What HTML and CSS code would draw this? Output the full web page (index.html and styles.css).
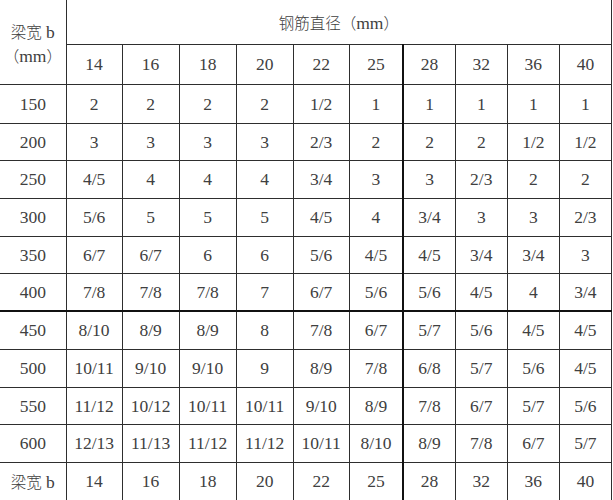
FILE: index.html
```html
<!DOCTYPE html>
<html lang="zh">
<head>
<meta charset="utf-8">
<link rel="stylesheet" href="styles.css">
</head>
<body>
<table class="rebar">
  <colgroup>
    <col class="c-head"><col class="c-a"><col class="c-b"><col class="c-b"><col class="c-b"><col class="c-a"><col class="c-c"><col class="c-d"><col class="c-d"><col class="c-d"><col class="c-d">
  </colgroup>
  <tr class="r-top">
    <td class="side head-side" rowspan="2"><span class="cjk">梁宽</span> b<br><span class="cjk">（</span>mm<span class="cjk">）</span></td>
    <td class="title" colspan="10"><span class="cjk">钢筋直径（</span>mm<span class="cjk">）</span></td>
  </tr>
  <tr class="r-dia">
    <td>14</td><td>16</td><td>18</td><td>20</td><td>22</td><td class="split">25</td><td>28</td><td>32</td><td>36</td><td>40</td>
  </tr>
  <tr class="r1"><td class="side">150</td><td>2</td><td>2</td><td>2</td><td>2</td><td>1/2</td><td class="split">1</td><td>1</td><td>1</td><td>1</td><td>1</td></tr>
  <tr class="r2"><td class="side">200</td><td>3</td><td>3</td><td>3</td><td>3</td><td>2/3</td><td class="split">2</td><td>2</td><td>2</td><td>1/2</td><td>1/2</td></tr>
  <tr class="r3"><td class="side">250</td><td>4/5</td><td>4</td><td>4</td><td>4</td><td>3/4</td><td class="split">3</td><td>3</td><td>2/3</td><td>2</td><td>2</td></tr>
  <tr class="r3"><td class="side">300</td><td>5/6</td><td>5</td><td>5</td><td>5</td><td>4/5</td><td class="split">4</td><td>3/4</td><td>3</td><td>3</td><td>2/3</td></tr>
  <tr class="r4"><td class="side">350</td><td>6/7</td><td>6/7</td><td>6</td><td>6</td><td>5/6</td><td class="split">4/5</td><td>4/5</td><td>3/4</td><td>3/4</td><td>3</td></tr>
  <tr class="r3 thick"><td class="side">400</td><td>7/8</td><td>7/8</td><td>7/8</td><td>7</td><td>6/7</td><td class="split">5/6</td><td>5/6</td><td>4/5</td><td>4</td><td>3/4</td></tr>
  <tr class="r3"><td class="side">450</td><td>8/10</td><td>8/9</td><td>8/9</td><td>8</td><td>7/8</td><td class="split">6/7</td><td>5/7</td><td>5/6</td><td>4/5</td><td>4/5</td></tr>
  <tr class="r3"><td class="side">500</td><td>10/11</td><td>9/10</td><td>9/10</td><td>9</td><td>8/9</td><td class="split">7/8</td><td>6/8</td><td>5/7</td><td>5/6</td><td>4/5</td></tr>
  <tr class="r4"><td class="side">550</td><td>11/12</td><td>10/12</td><td>10/11</td><td>10/11</td><td>9/10</td><td class="split">8/9</td><td>7/8</td><td>6/7</td><td>5/7</td><td>5/6</td></tr>
  <tr class="r3"><td class="side">600</td><td>12/13</td><td>11/13</td><td>11/12</td><td>11/12</td><td>10/11</td><td class="split">8/10</td><td>8/9</td><td>7/8</td><td>6/7</td><td>5/7</td></tr>
  <tr class="r3 last"><td class="side"><span class="cjk">梁宽</span> b</td><td>14</td><td>16</td><td>18</td><td>20</td><td>22</td><td class="split">25</td><td>28</td><td>32</td><td>36</td><td>40</td></tr>
</table>
</body>
</html>
```

FILE: styles.css
```css
html, body {
  margin: 0;
  padding: 0;
  background: #ffffff;
}

.rebar {
  border-collapse: collapse;
  table-layout: fixed;
  width: 612px;
  font-family: "Liberation Serif", "Noto Sans CJK SC", serif;
  font-size: 17.5px;
  color: #404040;
}

.c-head { width: 66px; }
.c-a { width: 56px; }
.c-b { width: 57px; }
.c-c { width: 54px; }
.c-d { width: 52px; }

.rebar td {
  border: 1px solid #2e2e2e;
  padding: 0;
  text-align: center;
  vertical-align: middle;
  line-height: 20px;
}

.cjk {
  font-family: "Noto Sans CJK SC", sans-serif;
  font-size: 15.5px;
  font-weight: 300;
}

.rebar .side {
  border-left: none;
}

.r-top td {
  border-top: none;
}

.r-top { height: 44px; }
.r-dia { height: 40px; }
.r1 { height: 39px; }
.r2 { height: 37px; }
.r3 { height: 38px; }
.r4 { height: 37px; }

.rebar .head-side {
  line-height: 23px;
  padding-top: 4px;
}

.rebar .title {
  padding-top: 1px;
}

.rebar td.split {
  border-right: 2px solid #111;
}

.thick td {
  border-bottom: 2px solid #111;
}

.last td {
  border-bottom: none;
}
```
